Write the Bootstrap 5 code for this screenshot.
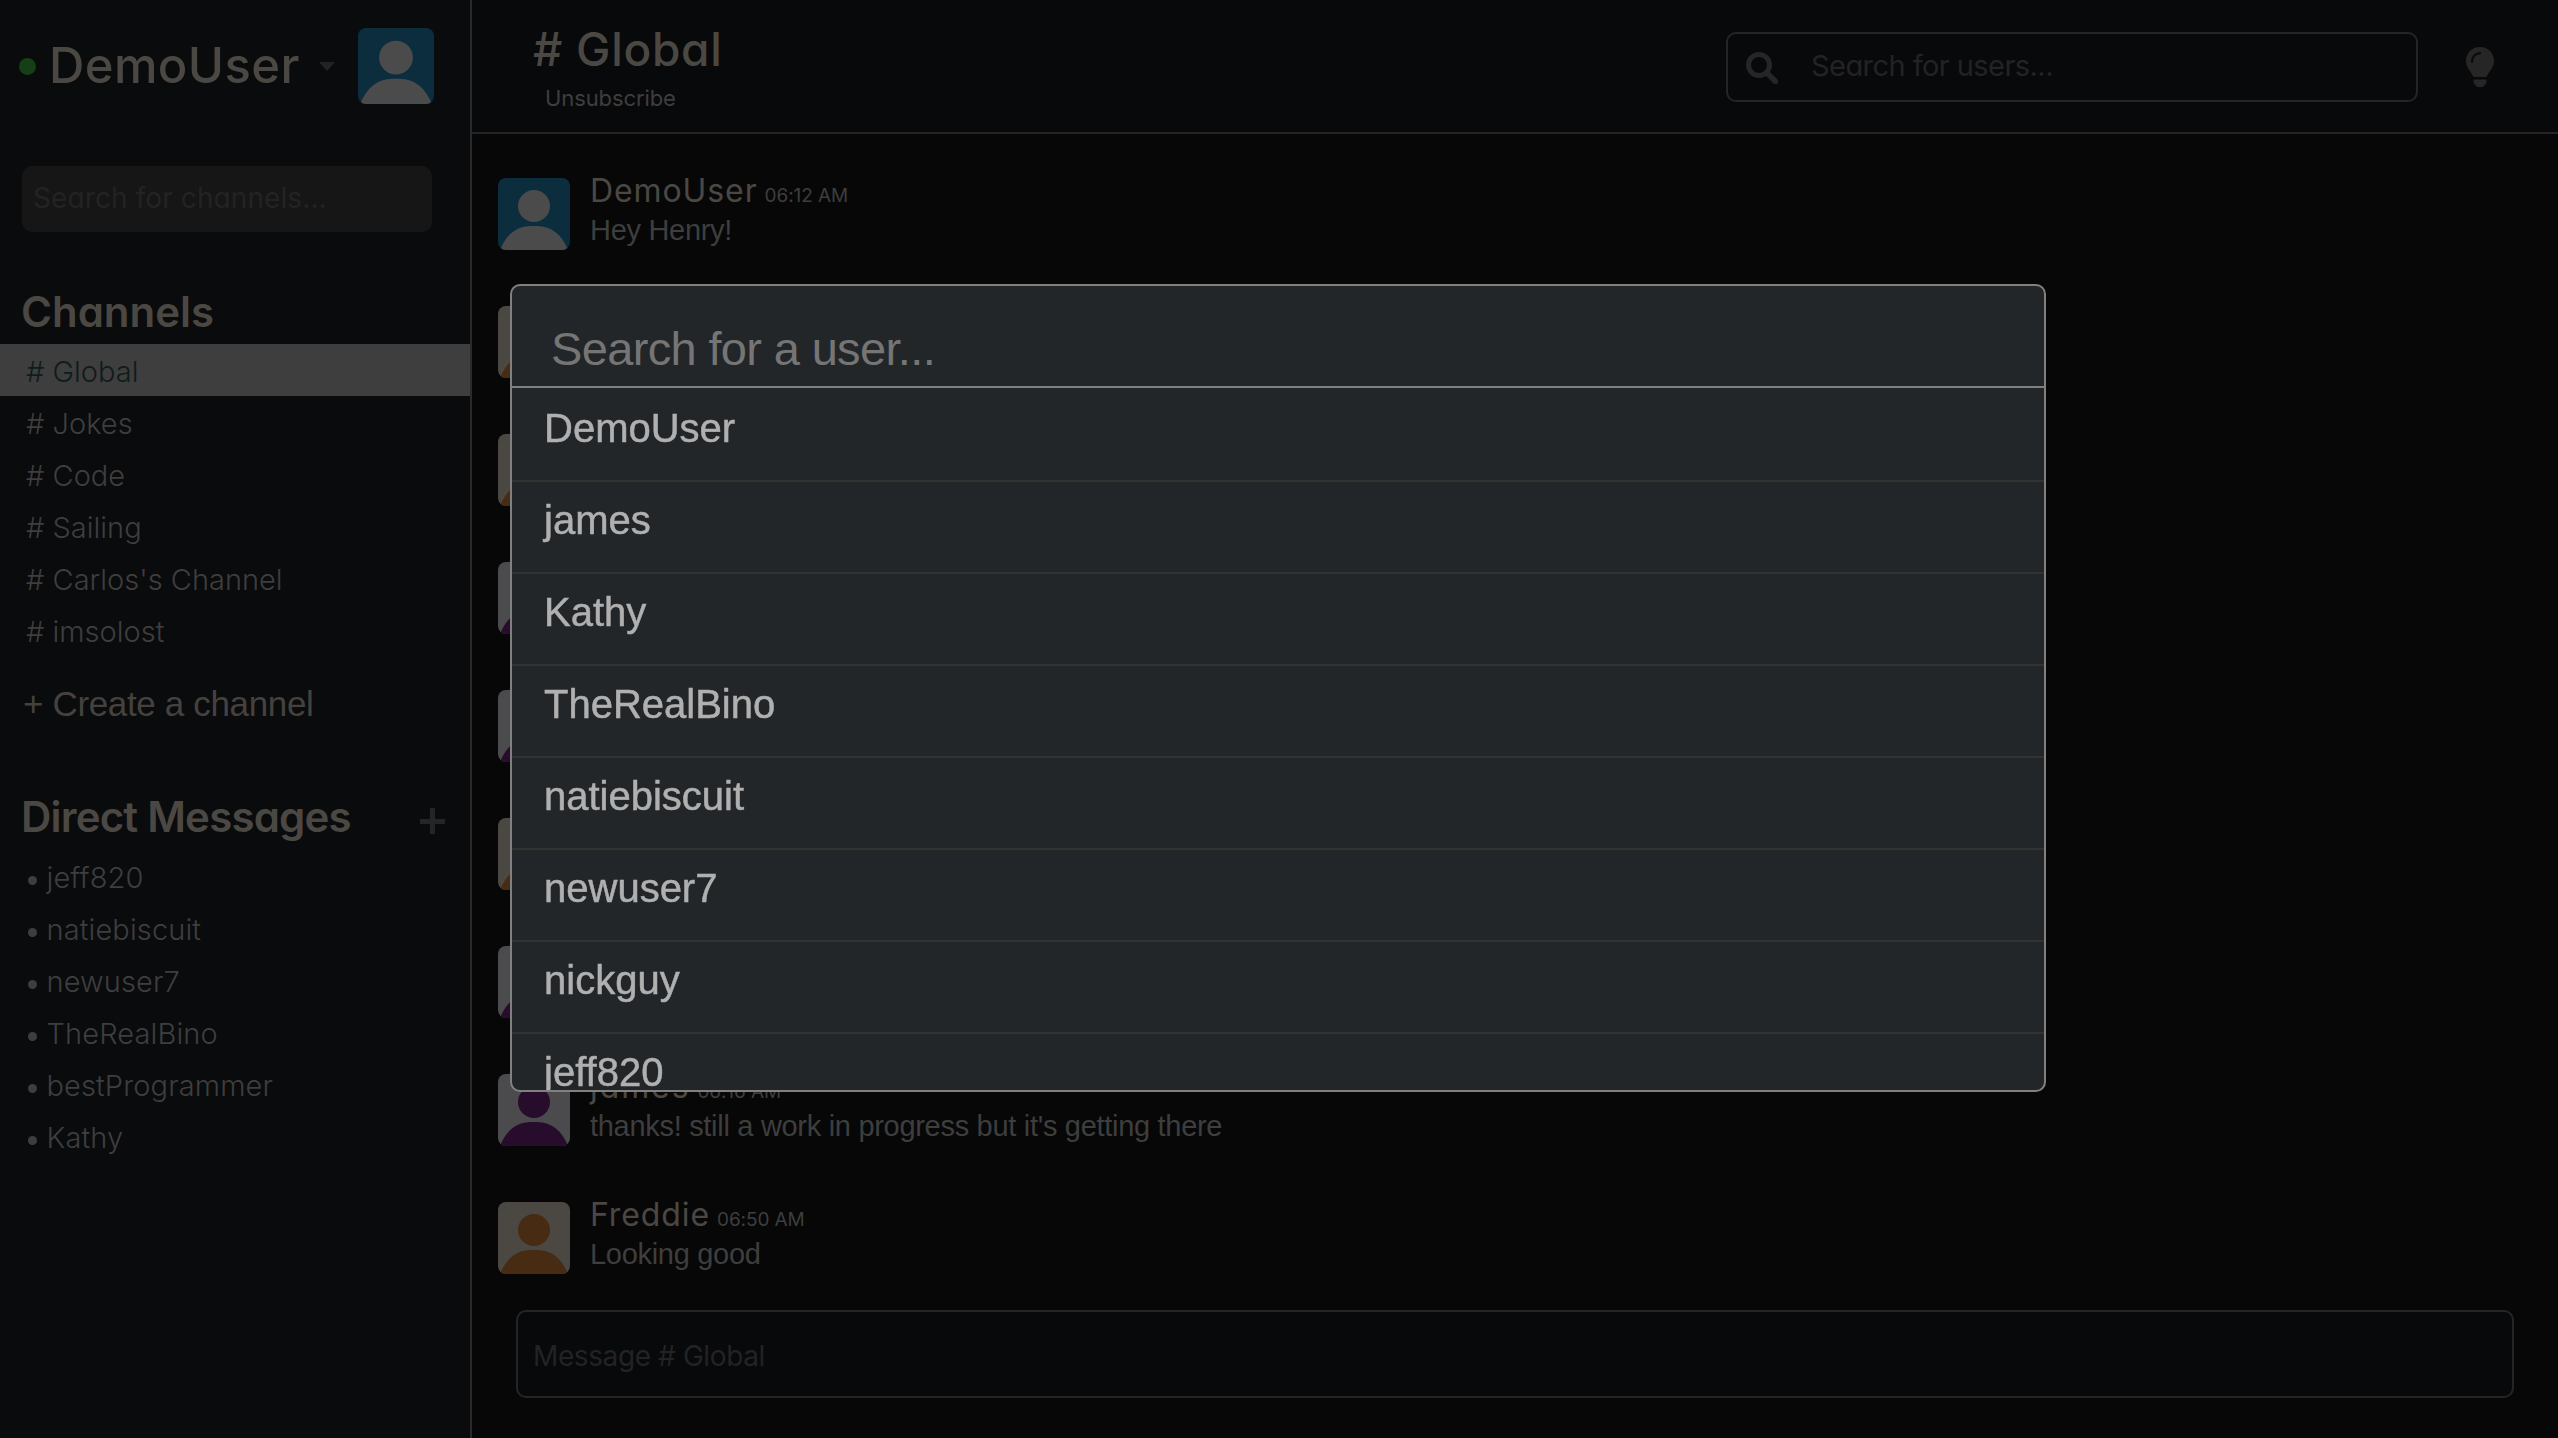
<!DOCTYPE html>
<html lang="en">
<head>
<meta charset="utf-8">
<title># Global</title>
<link href="https://cdn.jsdelivr.net/npm/bootstrap@5.3.0/dist/css/bootstrap.min.css" rel="stylesheet">
<style>
html,body{height:100%}
body{margin:0;background:#070707;color:#3e3e3e;font-family:Inter,"Liberation Sans",sans-serif;font-weight:300;overflow:hidden}
.geo{font-family:Inter,"Liberation Sans",sans-serif;font-feature-settings:"cv11";font-weight:400;color:#4b4843;white-space:nowrap}
.sidebar{width:472px;background:#0a0b0d;border-right:2px solid #2a2a2a}
.status-dot{width:17px;height:17px;background:#173f17;margin-left:19px;margin-right:13px}
.user-bar{height:132px}
.user-name{font-size:49px;line-height:60px;font-weight:500;letter-spacing:.4px;width:252px}
.caret{border:8px solid transparent;border-top:9px solid #222326;border-bottom:0;margin-left:18px}
.ava{width:72px;height:72px;border-radius:8px;overflow:hidden}
.ava-lg{width:76px;height:76px;margin-right:36px}
.tone-blue{background:#0c2d3e;fill:#4b4b4b}
.tone-orange{background:#4b4844;fill:#472b12}
.tone-purple{background:#4b4b4d;fill:#280c2c}
.chan-search{width:410px;height:66px;margin:34px 0 0 22px;background:#161616!important;border:0;border-radius:10px;font-size:28px;letter-spacing:.1px;padding:0 12px 3px 11px}
input::placeholder{color:#232323!important;opacity:1}
.side-title{font-size:42px;line-height:50px;font-weight:600;letter-spacing:-.8px}
.side-title.first{margin:55px 0 7px 21px;letter-spacing:0}
.side-row{height:52px;line-height:56px;font-size:29px;white-space:nowrap;padding-left:26px}
.side-row.active{background:#3e3e3e;color:#0f1c1c}
.dm-head{margin:58px 25px 5px 21px;height:60px}
.dm-head svg{margin-top:8px}
.dm{padding-left:27px;line-height:52px;letter-spacing:.12px}
.dm-dot{width:9px;height:9px;background:#3e3e3e;margin-left:1px;margin-right:9.5px;margin-top:4px}
.create{font-size:35px;line-height:50px;color:#45423e;margin-top:23px;padding-left:23px;white-space:nowrap;font-family:"Liberation Sans",Arial,sans-serif;letter-spacing:-.35px}
.topbar{height:134px;background:#08090b;border-bottom:2px solid #242527}
.top-head{margin-left:61px;margin-top:3px}
.top-title{font-size:46px;line-height:54px;font-weight:500;letter-spacing:.7px;margin-bottom:7px}
.unsub{font-size:22px;line-height:30px;font-weight:400;margin-left:12px;letter-spacing:-.1px}
.user-search{width:692px;height:70px;margin-top:2px;margin-right:35px;border:2px solid #242527;border-radius:10px}
.user-search svg{margin:2px 31px 0 18px}
.user-search input,.msg-input,.find-input{background:transparent!important;border:0;box-shadow:none!important;border-radius:0}
.user-search input{font-size:29px;padding:0 0 3px 2px;letter-spacing:-.56px}
.bulb-btn{width:54px;height:54px;margin-right:51px;margin-top:2px}
.log{padding-top:44px}
.msg{height:128px;padding-left:26px}
.msg-body{margin:-6px 0 0 20px}
.msg-name{font-size:32px;line-height:38px;letter-spacing:.9px}
.msg-name.wide{letter-spacing:1.9px}
.msg-time{font-size:19px;margin-left:7px;color:#3e3e3e;letter-spacing:-.1px}
.msg-text{font-size:29px;line-height:38px;margin-top:-4px;white-space:nowrap;font-family:"Liberation Sans",Arial,sans-serif;letter-spacing:-.3px}
.composer{height:88px;margin:0 44px 40px 44px;background:#08090b;border:2px solid #242527;border-radius:10px}
.msg-input{font-size:28px;padding:4px 0 0 15px;letter-spacing:-.4px}
.finder{width:1536px;max-width:none;height:808px;margin:284px 0 0 510px}
.finder .modal-content{height:808px;background:#232629;border:2px solid #808080;border-radius:10px;overflow:hidden;color:#b0b0b0}
.find-head{height:102px;border-bottom:2px solid #7f7f7f;margin-bottom:2px}
.find-input{font:400 47px "Liberation Sans",Arial,sans-serif;padding:25px 0 0 39px;letter-spacing:-.65px}
.find-input::placeholder{color:#757575!important}
.find-row{height:92px;padding:13px 0 0 32px;border-bottom:2px solid #313330;font:400 40px/50px "Liberation Sans",Arial,sans-serif;white-space:nowrap;-webkit-text-stroke:.5px #b0b0b0}
</style>
</head>
<body>
<svg class="d-none"><symbol id="person" viewBox="0 0 72 72"><circle cx="36" cy="28" r="16"/><path d="M2 72C8 57 18 48 33 48h6c15 0 25 9 31 24z"/></symbol></svg>
<div class="d-flex h-100">
  <aside class="sidebar flex-shrink-0 h-100">
    <div class="user-bar d-flex align-items-center">
      <span class="status-dot rounded-circle flex-shrink-0"></span>
      <span class="geo user-name">DemoUser</span>
      <span class="caret"></span>
      <svg class="ava ava-lg tone-blue ms-auto"><use href="#person"/></svg>
    </div>
    <input class="form-control chan-search geo" placeholder="Search for channels...">
    <div class="geo side-title first">Channels</div>
    <div class="side-row active"># Global</div>
    <div class="side-row"># Jokes</div>
    <div class="side-row"># Code</div>
    <div class="side-row"># Sailing</div>
    <div class="side-row"># Carlos's Channel</div>
    <div class="side-row"># imsolost</div>
    <div class="create">+ Create a channel</div>
    <div class="dm-head d-flex align-items-center">
      <span class="geo side-title">Direct Messages</span>
      <svg class="ms-auto" width="25" height="26" stroke="#242527" stroke-width="5"><path d="M0 13.500h25M12.500 0v26"/></svg>
    </div>
    <div class="side-row dm d-flex align-items-center"><i class="dm-dot rounded-circle"></i>jeff820</div>
    <div class="side-row dm d-flex align-items-center"><i class="dm-dot rounded-circle"></i>natiebiscuit</div>
    <div class="side-row dm d-flex align-items-center"><i class="dm-dot rounded-circle"></i>newuser7</div>
    <div class="side-row dm d-flex align-items-center"><i class="dm-dot rounded-circle"></i>TheRealBino</div>
    <div class="side-row dm d-flex align-items-center"><i class="dm-dot rounded-circle"></i>bestProgrammer</div>
    <div class="side-row dm d-flex align-items-center"><i class="dm-dot rounded-circle"></i>Kathy</div>
  </aside>
  <main class="flex-grow-1 d-flex flex-column h-100">
    <header class="topbar d-flex align-items-center flex-shrink-0">
      <div class="top-head">
        <div class="geo top-title"># Global</div>
        <div class="unsub">Unsubscribe</div>
      </div>
      <div class="user-search d-flex align-items-center ms-auto">
        <svg class="flex-shrink-0" width="32" height="32" viewBox="0 0 32 32" fill="none" stroke="#262626"><circle cx="13" cy="13" r="10.500" stroke-width="5"/><path d="M21.500 21.500l8 8" stroke-width="5.500" stroke-linecap="round"/></svg>
        <input class="form-control geo" placeholder="Search for users...">
      </div>
      <div class="bulb-btn d-flex align-items-center justify-content-center">
        <svg width="28" height="40" viewBox="0 0 28 40"><path fill="#262626" d="M14 0C6 0 0 6 0 14c0 7 5 10 7.500 16h13C23 24 28 21 28 14 28 6 22 0 14 0zM7.500 32.500h13V36L17 40h-6l-3.500-4z"/><path d="M6 15c0-5 3-8.500 8-8.800" fill="none" stroke="#0a0a0b" stroke-width="2.200" stroke-linecap="round"/></svg>
      </div>
    </header>
    <section class="log flex-grow-1 overflow-hidden">
      <div class="msg d-flex">
        <svg class="ava tone-blue flex-shrink-0"><use href="#person"/></svg>
        <div class="msg-body"><div class="geo msg-name">DemoUser<span class="geo msg-time">06:12 AM</span></div><div class="msg-text">Hey Henry!</div></div>
      </div>
      <div class="msg d-flex"><svg class="ava tone-orange"><use href="#person"/></svg></div>
      <div class="msg d-flex"><svg class="ava tone-orange"><use href="#person"/></svg></div>
      <div class="msg d-flex"><svg class="ava tone-purple"><use href="#person"/></svg></div>
      <div class="msg d-flex"><svg class="ava tone-purple"><use href="#person"/></svg></div>
      <div class="msg d-flex"><svg class="ava tone-orange"><use href="#person"/></svg></div>
      <div class="msg d-flex"><svg class="ava tone-purple"><use href="#person"/></svg></div>
      <div class="msg d-flex">
        <svg class="ava tone-purple flex-shrink-0"><use href="#person"/></svg>
        <div class="msg-body"><div class="geo msg-name wide">james<span class="geo msg-time">06:16 AM</span></div><div class="msg-text">thanks! still a work in progress but it's getting there</div></div>
      </div>
      <div class="msg d-flex">
        <svg class="ava tone-orange flex-shrink-0"><use href="#person"/></svg>
        <div class="msg-body"><div class="geo msg-name">Freddie<span class="geo msg-time">06:50 AM</span></div><div class="msg-text">Looking good</div></div>
      </div>
    </section>
    <div class="composer flex-shrink-0"><input class="form-control msg-input h-100" placeholder="Message # Global"></div>
  </main>
</div>
<div class="modal show d-block" tabindex="-1">
  <div class="modal-dialog finder">
    <div class="modal-content">
      <div class="find-head flex-shrink-0"><input class="form-control find-input h-100" placeholder="Search for a user..."></div>
      <div class="find-row flex-shrink-0">DemoUser</div>
      <div class="find-row flex-shrink-0">james</div>
      <div class="find-row flex-shrink-0">Kathy</div>
      <div class="find-row flex-shrink-0">TheRealBino</div>
      <div class="find-row flex-shrink-0">natiebiscuit</div>
      <div class="find-row flex-shrink-0">newuser7</div>
      <div class="find-row flex-shrink-0">nickguy</div>
      <div class="find-row flex-shrink-0">jeff820</div>
    </div>
  </div>
</div>
<script src="https://cdn.jsdelivr.net/npm/bootstrap@5.3.0/dist/js/bootstrap.bundle.min.js"></script>
</body>
</html>
